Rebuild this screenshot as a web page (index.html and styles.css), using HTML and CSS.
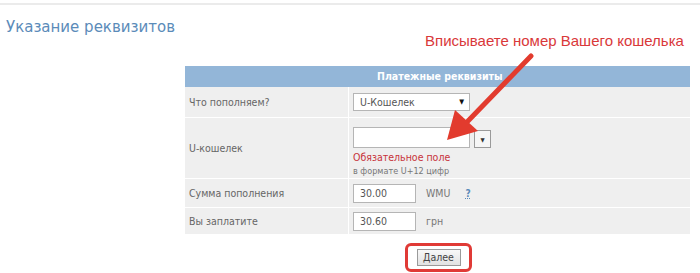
FILE: index.html
```html
<!DOCTYPE html>
<html>
<head>
<meta charset="utf-8">
<link rel="stylesheet" href="styles.css">
</head>
<body>
<div class="page">
  <div class="topline"></div>
  <h1 class="title">Указание реквизитов</h1>
  <div class="note">Вписываете номер Вашего кошелька</div>
  <div class="form">
    <div class="head">Платежные реквизиты</div>
    <div class="row r1">
      <div class="label">Что пополняем?</div>
      <div class="value">
        <div class="select"><span>U-Кошелек</span><span class="tri">▼</span></div>
      </div>
    </div>
    <div class="row r2">
      <div class="label">U-кошелек</div>
      <div class="value col">
        <div class="combo"><div class="input wide"></div><div class="dd"><span class="mini">▼</span></div></div>
        <div class="err">Обязательное поле</div>
        <div class="hint">в формате U+12 цифр</div>
      </div>
    </div>
    <div class="row r3">
      <div class="label">Сумма пополнения</div>
      <div class="value">
        <div class="input short">30.00</div><span class="unit">WMU</span><span class="q">?</span>
      </div>
    </div>
    <div class="row r4">
      <div class="label">Вы заплатите</div>
      <div class="value">
        <div class="input short">30.60</div><span class="unit">грн</span>
      </div>
    </div>
  </div>
  <div class="actions">
    <div class="ring"><div class="btn">Далее</div></div>
  </div>
  <svg class="arrow" width="700" height="273" viewBox="0 0 700 273">
    <line x1="531" y1="56" x2="468" y2="121" stroke="#e23b2e" stroke-width="5" stroke-linecap="round"/>
    <polygon points="447,140 455,110 478,131" fill="#e23b2e"/>
  </svg>
</div>
</body>
</html>
```
FILE: styles.css
```css
html, body { margin: 0; padding: 0; background: #fff; }
.page { position: relative; width: 700px; height: 273px; overflow: hidden; font-family: "DejaVu Sans Condensed", "DejaVu Sans", Verdana, sans-serif; }
.topline { height: 2px; background: #ebebeb; margin-top: 3px; }
.title { margin: 13px 0 0 6px; font-family: "DejaVu Sans", Verdana, sans-serif; font-size: 15px; font-weight: normal; color: #5b8bb9; line-height: 18px; }
.note { margin: -4px 0 0 425px; font-family: "Liberation Sans", Arial, sans-serif; font-size: 15px; color: #d9383a; line-height: 17px; }
.form { margin: 17px 0 0 185px; width: 505px; background: #fff; }
.head { height: 21px; background: #93b6d8; color: #fff; font-weight: bold; font-size: 10.5px; line-height: 21px; padding-left: 192px; }
.row { display: grid; grid-template-columns: 163px 1fr; column-gap: 1px; background: #fff; margin-top: 1px; }
.row .label, .row .value { background: #efefef; display: flex; align-items: center; }
.label { padding-left: 4px; font-size: 10.5px; color: #666; }
.value { padding-left: 4px; font-size: 10.5px; color: #555; }
.r1 { height: 30px; margin-top: 0; }
.r2 { height: 60px; }
.r3 { height: 28px; }
.r4 { height: 26px; }
.value.col { flex-direction: column; align-items: flex-start; justify-content: flex-start; padding-top: 9px; box-sizing: border-box; }
.select { width: 117px; height: 18px; box-sizing: border-box; border: 1px solid #b5b5b5; background: #fff; display: flex; align-items: center; justify-content: space-between; padding: 0 5px 0 6px; font-size: 10.5px; color: #555; }
.tri { font-size: 7px; color: #111; }
.combo { display: flex; align-items: flex-end; gap: 4px; }
.input { height: 19px; box-sizing: border-box; border: 1px solid #b5b5b5; background: #fff; font-size: 10.5px; color: #555; padding-left: 6px; line-height: 17px; }
.wide { width: 117px; height: 21px; }
.dd { width: 17px; height: 18px; box-sizing: border-box; border: 1px solid #9a9a9a; background: #f6f6f6; display: flex; align-items: center; justify-content: center; }
.mini { font-size: 6px; color: #333; }
.err { color: #c8333a; font-size: 10.5px; margin-top: 3px; line-height: 13px; }
.hint { color: #777; font-size: 9px; margin-top: 2px; line-height: 10px; }
.short { width: 63px; }
.unit { margin-left: 10px; color: #777; font-size: 10.5px; }
.q { margin-left: 15px; color: #5b8bb9; font-weight: bold; font-size: 10px; text-decoration: underline dotted; }
.actions { display: flex; margin: 9px 0 0 405px; }
.ring { width: 67px; height: 29px; box-sizing: border-box; border: 3px solid #e03a36; border-radius: 6px; display: flex; align-items: center; justify-content: center; }
.btn { width: 44px; height: 17px; box-sizing: border-box; border: 1px solid #9a9a9a; background: linear-gradient(#f8f8f8, #e2e2e2); font-size: 10.5px; color: #444; text-align: center; line-height: 15px; }
.arrow { position: absolute; left: 0; top: 0; pointer-events: none; }
```
